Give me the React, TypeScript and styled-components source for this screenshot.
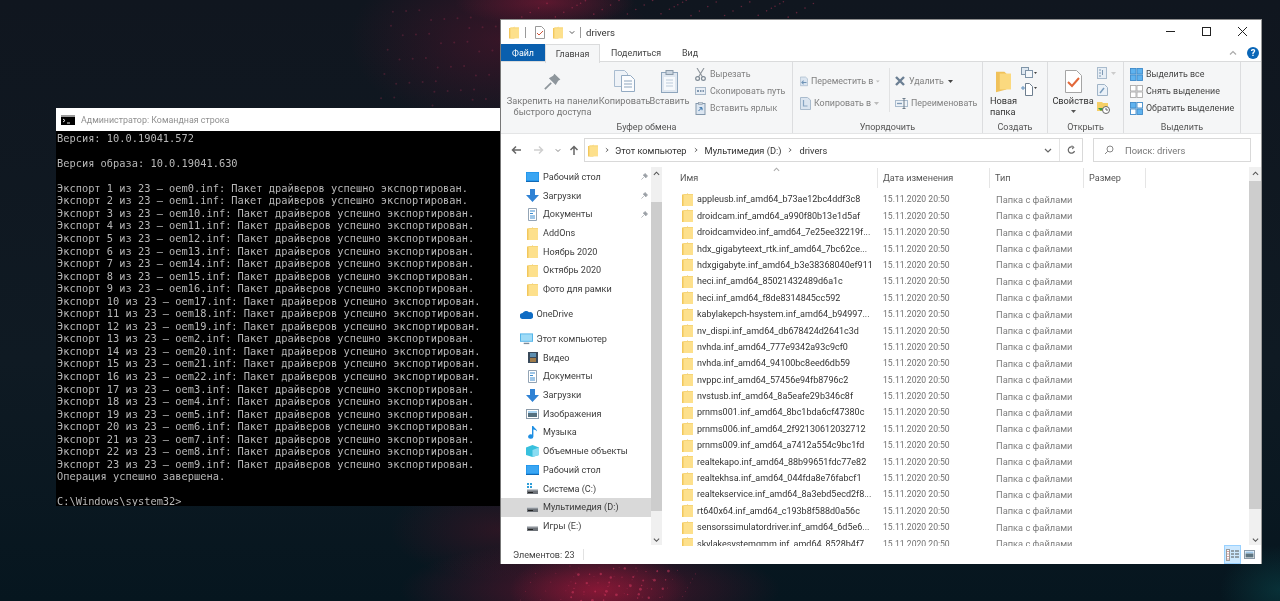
import React from "react";
import styled, { createGlobalStyle } from "styled-components";

const Global = createGlobalStyle`
  html, body { margin: 0; padding: 0; background: #0e1720; }
  #root { width: 1280px; height: 601px; overflow: hidden; }
  * { box-sizing: border-box; }
`;

const UI = `Roboto, "Noto Sans", sans-serif`;

const Desktop = styled.div`
  position: relative;
  width: 1280px;
  height: 601px;
  overflow: hidden;
  font-family: ${UI};
  background:
    radial-gradient(ellipse 90px 40px at 600px 590px, rgba(170, 25, 60, 0.6), transparent 100%),
    radial-gradient(ellipse 190px 50px at 590px 590px, rgba(120, 20, 50, 0.65), transparent 100%),
    radial-gradient(ellipse 90px 24px at 545px 2px, rgba(130, 25, 55, 0.6), transparent 100%),
    radial-gradient(ellipse 150px 90px at 500px 40px, rgba(85, 20, 45, 0.55), transparent 100%),
    radial-gradient(ellipse 110px 50px at 500px 530px, rgba(85, 20, 40, 0.45), transparent 100%),
    radial-gradient(ellipse 60px 45px at 1280px 590px, rgba(10, 70, 75, 0.55), transparent 100%),
    linear-gradient(180deg, #10161f 0%, #0f1a23 60%, #06161f 100%);
`;

const Speckles = styled.svg`
  position: absolute;
  inset: 0;
  filter: blur(0.5px);
`;

const CmdWindow = styled.div`
  position: absolute;
  left: 56px;
  top: 108px;
  width: 446px;
  height: 398px;
  display: flex;
  flex-direction: column;
  background: #000;
  filter: blur(0.3px);
`;

const CmdTitle = styled.div`
  height: 23px;
  flex: none;
  background: #fff;
  display: flex;
  align-items: center;
  gap: 6px;
  padding-left: 5px;
  font-size: 8.9px;
  color: #8f8f8f;
`;

const CmdBody = styled.pre`
  margin: 0;
  padding: 0.6px 0 0 1px;
  font-family: "DejaVu Sans Mono", "Liberation Mono", monospace;
  font-size: 10.35px;
  line-height: 12.55px;
  color: #b8b8b8;
  overflow: hidden;
`;

const Explorer = styled.div`
  position: absolute;
  left: 500px;
  top: 19px;
  width: 762px;
  height: 545px;
  display: flex;
  flex-direction: column;
  background: #fff;
  border-left: 1px solid #777;
  border-top: 1px solid #8e8e8e;
  border-right: 1px solid #9a9a9a;
  color: #333;
  font-size: 9px;
  filter: blur(0.3px);
`;

const TitleBar = styled.div`
  height: 24px;
  flex: none;
  display: flex;
  align-items: center;
  padding-left: 8px;
`;

const Gap = styled.span<{ $w: number }>`
  width: ${(p) => p.$w}px;
  flex: none;
`;

const TitleSep = styled.span<{ $m: number }>`
  width: 1px;
  height: 11px;
  background: #9a9a9a;
  margin: 0 ${(p) => p.$m}px;
`;

const TitleText = styled.span`
  font-size: 9.6px;
  color: #333;
`;

const WinControls = styled.div`
  margin-left: auto;
  display: flex;
  width: 107px;
  height: 100%;
  margin-right: 1px;
  padding-bottom: 2px;
`;

const WinButton = styled.div`
  flex: 1;
  display: flex;
  align-items: center;
  justify-content: center;
`;

const TabsRow = styled.div`
  height: 18px;
  flex: none;
  display: flex;
  align-items: stretch;
  font-size: 8.9px;
  border-bottom: 1px solid #dadbdc;
`;

const Tab = styled.div<{ $kind?: "file" | "active"; $w: number }>`
  width: ${(p) => p.$w}px;
  display: flex;
  align-items: center;
  justify-content: center;
  color: ${(p) => (p.$kind === "file" ? "#fff" : "#444")};
  background: ${(p) => (p.$kind === "file" ? "#0a5fae" : "#fff")};
  ${(p) =>
    p.$kind === "active" &&
    `border: 1px solid #dadbdc; border-bottom: none; height: 19px; z-index: 1; background:#f5f6f7;`}
`;

const RibbonRight = styled.div`
  margin-left: auto;
  margin-right: 2px;
  display: flex;
  align-items: center;
  gap: 10px;
`;

const HelpDot = styled.div`
  width: 12px;
  height: 12px;
  border-radius: 50%;
  background: #0a66b7;
  color: #fff;
  font-size: 9.5px;
  font-weight: 700;
  display: flex;
  align-items: center;
  justify-content: center;
`;

const Ribbon = styled.div`
  height: 72px;
  flex: none;
  background: #f5f6f7;
  border-bottom: 1px solid #e4e5e6;
  display: flex;
`;

const Group = styled.div<{ $w: number }>`
  width: ${(p) => p.$w}px;
  flex: none;
  border-right: 1px solid #dcdddf;
  display: flex;
  flex-direction: column;
`;

const GroupBody = styled.div<{ $pl: number }>`
  flex: 1;
  display: flex;
  align-items: flex-start;
  padding-left: ${(p) => p.$pl}px;
  min-height: 0;
`;

const GroupLabel = styled.div`
  height: 12px;
  flex: none;
  text-align: center;
  color: #555;
  font-size: 9px;
  line-height: 12px;
`;

const BigButton = styled.div<{ $w: number; $left?: boolean; $dim?: boolean }>`
  width: ${(p) => p.$w}px;
  flex: none;
  display: flex;
  flex-direction: column;
  align-items: ${(p) => (p.$left ? "flex-start" : "center")};
  padding-top: 7px;
  color: ${(p) => (p.$dim ? "#777" : "#333")};
  font-size: 9.2px;
  line-height: 11px;
  white-space: nowrap;
`;

const BigIconSlot = styled.div`
  height: 24px;
  margin-bottom: 1.5px;
  display: flex;
  align-items: center;
  justify-content: center;
  align-self: center;
`;

const CaretBelow = styled.span`
  margin-top: 4px;
  display: flex;
`;

const SmallStack = styled.div<{ $pt?: number; $gap?: number; $ml?: number; $w?: number }>`
  display: flex;
  flex-direction: column;
  padding-top: ${(p) => p.$pt ?? 6}px;
  gap: ${(p) => p.$gap ?? 4.5}px;
  margin-left: ${(p) => p.$ml ?? 0}px;
  ${(p) => p.$w && `width: ${p.$w}px;`}
  flex: none;
`;

const SmallRow = styled.div<{ $dim?: boolean; $tg?: number }>`
  height: 12.5px;
  display: flex;
  align-items: center;
  gap: ${(p) => p.$tg ?? 4}px;
  color: ${(p) => (p.$dim ? "#808080" : "#444")};
  font-size: 8.9px;
  white-space: nowrap;
`;

const VLine = styled.span`
  width: 1px;
  height: 44px;
  margin-top: 6px;
  background: #e1e2e3;
  flex: none;
`;

const NavBar = styled.div`
  height: 31px;
  flex: none;
  display: flex;
  align-items: center;
  padding-top: 1px;
`;

const NavIcons = styled.div`
  width: 83px;
  flex: none;
  display: flex;
  align-items: center;
  padding-left: 10px;
`;

const AddressBox = styled.div`
  width: 499px;
  height: 24px;
  flex: none;
  border: 1px solid #d9d9d9;
  display: flex;
  align-items: center;
  padding-left: 3px;
  color: #333;
  font-size: 9.25px;
`;

const CrumbSep = styled.span<{ $w?: number }>`
  display: inline-flex;
  width: ${(p) => p.$w ?? 18}px;
  justify-content: center;
`;

const AddressEnd = styled.div`
  margin-left: auto;
  height: 100%;
  display: flex;
  align-items: center;
`;

const AddressCell = styled.div<{ $sep?: boolean; $w: number }>`
  width: ${(p) => p.$w}px;
  height: 100%;
  display: flex;
  align-items: center;
  justify-content: center;
  ${(p) => p.$sep && `border-left: 1px solid #e4e4e4;`}
`;

const SearchBox = styled.div`
  width: 158px;
  height: 24px;
  margin-left: 10px;
  flex: none;
  border: 1px solid #d9d9d9;
  display: flex;
  align-items: center;
  padding-left: 10px;
  gap: 11px;
  color: #777;
  font-size: 9.4px;
`;

const Body = styled.div`
  flex: 1;
  min-height: 0;
  display: flex;
`;

const NavPane = styled.div`
  width: 150px;
  flex: none;
  padding-top: 2.6px;
  overflow: hidden;
`;

const NavRow = styled.div<{ $level: number; $sel?: boolean; $mt?: number }>`
  height: 18.7px;
  margin-top: ${(p) => p.$mt ?? 0}px;
  display: flex;
  align-items: center;
  padding-left: ${(p) => (p.$level === 0 ? 19 : 25)}px;
  gap: ${(p) => (p.$level === 0 ? 3.5 : 4)}px;
  color: #3c3c3c;
  font-size: 9.1px;
  background: ${(p) => (p.$sel ? "#d9d9d9" : "transparent")};
  white-space: nowrap;
`;

const NavIconSlot = styled.span`
  width: 13px;
  height: 13px;
  flex: none;
  display: flex;
  align-items: center;
  justify-content: center;
`;

const PinSlot = styled.span`
  margin-left: auto;
  margin-right: 3px;
  display: flex;
`;

const Scroll = styled.div<{ $thumbTop: number; $thumbH: number; $w: number }>`
  width: ${(p) => p.$w}px;
  flex: none;
  margin-top: 2px;
  background: #f0f0f0;
  position: relative;
  &::before {
    content: "";
    position: absolute;
    left: 0;
    right: 0;
    top: ${(p) => p.$thumbTop}px;
    height: ${(p) => p.$thumbH}px;
    background: #cdcdcd;
  }
`;

const ScrollArrow = styled.div<{ $end?: boolean }>`
  position: absolute;
  left: 0;
  right: 0;
  ${(p) => (p.$end ? "bottom: 2px;" : "top: 3px;")}
  display: flex;
  justify-content: center;
`;

const Content = styled.div`
  flex: 1;
  min-width: 0;
  display: flex;
  flex-direction: column;
  overflow: hidden;
  height: 381px;
`;

const HeaderRow = styled.div`
  height: 26.2px;
  flex: none;
  display: grid;
  grid-template-columns: 208px 112px 94px 62px;
  position: relative;
  color: #555;
  font-size: 9.1px;
`;

const HeaderCell = styled.div<{ $first?: boolean }>`
  display: flex;
  align-items: center;
  padding-left: ${(p) => (p.$first ? 10 : 5)}px;
  border-right: 1px solid #e5e5e5;
  margin: 3px 0 3px;
`;

const SortMark = styled.span`
  position: absolute;
  left: 103px;
  top: 0;
`;

const FileList = styled.div`
  flex: 1;
  min-height: 0;
  overflow: hidden;
`;

const FileRow = styled.div`
  height: 16.4px;
  display: grid;
  grid-template-columns: 208px 113px 93px;
  align-items: center;
  font-size: 9px;
  white-space: nowrap;
`;

const NameCell = styled.div`
  display: flex;
  align-items: center;
  gap: 4px;
  padding-left: 12px;
  color: #333;
  svg {
    flex: none;
  }
`;

const DateCell = styled.div`
  padding-left: 5px;
  color: #707070;
  font-size: 8.6px;
`;

const TypeCell = styled.div`
  padding-left: 5px;
  color: #7c7c7c;
  font-size: 9.3px;
`;

const StatusBar = styled.div`
  height: 19px;
  flex: none;
  display: flex;
  align-items: center;
  padding-left: 12px;
  color: #444;
  font-size: 9px;
`;

const StatusSep = styled.span`
  width: 1px;
  height: 11px;
  background: #e2e2e2;
  margin-left: 8px;
`;

const ViewButtons = styled.div`
  margin-left: auto;
  margin-right: 6px;
  display: flex;
  align-items: center;
  gap: 3px;
  height: 100%;
`;

const ViewActive = styled.div`
  width: 17px;
  height: 19px;
  background: #cce8ff;
  border: 1px solid #99d1ff;
  display: flex;
  align-items: center;
  justify-content: center;
`;

/* ---------- icons ---------- */

const Folder = ({ w = 11, h = 13 }: { w?: number; h?: number }) => (
  <svg width={w} height={h} viewBox="0 0 11 13">
    <path d="M0 1.5h4.5L6 0v13H0z" fill="#f2c75c" />
    <path d="M1.5 1h9.5v12H1.5z" fill="#fde08c" />
    <path d="M1.5 1h9.5v1H1.5z" fill="#f6d578" />
  </svg>
);

const Pin = ({ s = 7 }: { s?: number }) => (
  <svg width={s} height={s} viewBox="0 0 8 8">
    <path d="M4.6 0.5L7.5 3.4 6.6 3.9 5.6 5.6 2.5 2.4 4.1 1.4z M3.2 4.8L0.5 7.5" fill="#9a9fa5" stroke="#9a9fa5" strokeWidth="0.8" />
  </svg>
);

const BigPin = () => (
  <svg width="17" height="17" viewBox="0 0 8 8">
    <path d="M4.9 0.3L7.7 3.1 6.7 3.7 5.5 5.7 2.3 2.5 4.3 1.3z" fill="#8e969c" />
    <path d="M3.4 4.6L0.4 7.6" stroke="#8e969c" strokeWidth="0.8" />
  </svg>
);

const CopyIcon = () => (
  <svg width="21" height="22" viewBox="0 0 21 22">
    <path d="M.5.5h10l3 3v13H.5z" fill="#eef2f7" stroke="#a9bcd0" />
    <path d="M7.5 5.5h9l4 4v12h-13z" fill="#fbfcfe" stroke="#93aac2" />
    <path d="M10 11h8M10 14h8M10 17h8" stroke="#8da5bd" />
  </svg>
);

const PasteIcon = () => (
  <svg width="17" height="23" viewBox="0 0 17 23">
    <rect x=".5" y="2.5" width="16" height="20" fill="#dfe7f0" stroke="#8ea5bc" />
    <rect x="5" y=".5" width="7" height="4" fill="#c9d4df" stroke="#8a9aa9" />
    <path d="M3 7h11v13H3z" fill="#f6f9fc" />
    <path d="M5 10h7M5 13h7M5 16h7" stroke="#bccbda" />
  </svg>
);

const Scissors = () => (
  <svg width="11" height="13" viewBox="0 0 11 13">
    <path d="M2 0l5.5 9M9 0L3.5 9" stroke="#8d949b" strokeWidth="1.1" fill="none" />
    <circle cx="2.6" cy="10.5" r="1.9" fill="none" stroke="#7e8a95" strokeWidth="1.2" />
    <circle cx="8.4" cy="10.5" r="1.9" fill="none" stroke="#7e8a95" strokeWidth="1.2" />
  </svg>
);

const PathIcon = () => (
  <svg width="11" height="8" viewBox="0 0 11 8">
    <rect x=".5" y=".5" width="10" height="7" fill="#e8eef5" stroke="#a7b7c7" />
    <path d="M2 4h2M5 4h1.5M7.5 4H9" stroke="#5f7c99" strokeWidth="1.4" />
  </svg>
);

const ShortcutIcon = () => (
  <svg width="11" height="13" viewBox="0 0 10 13">
    <rect x=".5" y="1.5" width="9" height="11" fill="#dce6f1" stroke="#8397ab" />
    <rect x="3" y=".5" width="4" height="2" fill="#c7d0da" stroke="#8a9aa9" strokeWidth=".6" />
    <path d="M3 9l3-3M4 5.7h2.5v2.5" stroke="#2f6ca5" fill="none" />
  </svg>
);

const MoveIcon = ({ arrow }: { arrow: boolean }) => (
  <svg width="11" height="14" viewBox="0 0 11 14">
    <path d="M.5 1.5h7l3 2.5v9.5H.5z" fill="#dbe5f0" stroke="#a9bbcd" />
    {arrow ? (
      <path d="M9 9H3M5 6.5L2.5 9 5 11.5" stroke="#6f93b6" fill="none" strokeWidth="1.4" />
    ) : (
      <path d="M3.5 4v6h4" stroke="#87a5c2" fill="none" strokeWidth="1.2" />
    )}
  </svg>
);

const DeleteX = () => (
  <svg width="10" height="10" viewBox="0 0 10 10">
    <path d="M1 1l8 8M9 1L1 9" stroke="#6b7f93" strokeWidth="2.4" />
  </svg>
);

const RenameIcon = () => (
  <svg width="13" height="11" viewBox="0 0 13 11">
    <rect x=".5" y="2.5" width="12" height="6" fill="#eef3f8" stroke="#a9bbcd" />
    <path d="M2 5.5h5" stroke="#7f9ab5" strokeWidth="1.4" />
    <path d="M9 .5v10M7.5.5h3M7.5 10.5h3" stroke="#6d7c8a" fill="none" />
  </svg>
);

const Caret = ({ c = "#777" }: { c?: string }) => (
  <svg width="5" height="3" viewBox="0 0 5 3">
    <path d="M0 0h5L2.5 3z" fill={c} />
  </svg>
);

const Chevron = ({ dir = "right", c = "#666", s = 7 }: { dir?: "right" | "down" | "up"; c?: string; s?: number }) => {
  const d = dir === "right" ? "M2.5 1l3 2.5-3 2.5" : dir === "down" ? "M1 2.5l3 3 3-3" : "M1 5l3-3 3 3";
  return (
    <svg width={s} height={s} viewBox="0 0 8 7">
      <path d={d} fill="none" stroke={c} strokeWidth="1.2" />
    </svg>
  );
};

const NewFolderBig = () => (
  <svg width="15" height="23" viewBox="0 0 16 23">
    <path d="M0 1h9l2 2v17l-11 3z" fill="#f0c15a" />
    <path d="M4 3h12v17H4z" fill="#fbd97f" />
  </svg>
);

const NewItem = () => (
  <svg width="16" height="13" viewBox="0 0 16 13">
    <rect x=".5" y=".5" width="7" height="7" fill="#dfe8f1" stroke="#7f94a8" />
    <rect x="4.5" y="3.5" width="7" height="7" fill="#f5f8fb" stroke="#7f94a8" />
    <path d="M13 5h3l-1.5 2z" fill="#444" />
  </svg>
);

const QuickItem = () => (
  <svg width="16" height="13" viewBox="0 0 16 13">
    <path d="M4.5.5h4l3 3v9h-7z" fill="#fff" stroke="#6d7e8f" />
    <path d="M0 5h4M2 3v4" stroke="#5f90be" />
    <path d="M13 4h3l-1.5 2z" fill="#444" />
  </svg>
);

const PropsIcon = () => (
  <svg width="17" height="23" viewBox="0 0 17 23">
    <path d="M.5.5h11l5 5v17H.5z" fill="#fff" stroke="#a5a5a5" />
    <path d="M3 12l4 4 7-8" fill="none" stroke="#e2683a" strokeWidth="2" />
  </svg>
);

const OpenSmall = () => (
  <svg width="10" height="12" viewBox="0 0 10 12">
    <rect x=".5" y=".5" width="9" height="11" fill="#e7eef5" stroke="#a9bbcd" />
    <path d="M2 3h2M2 6h2M2 9h2M5.5 8V3" stroke="#7f9ab5" />
  </svg>
);

const EditSmall = () => (
  <svg width="11" height="12" viewBox="0 0 11 12">
    <path d="M.5.5h7l3 3v8H.5z" fill="#eaf1f8" stroke="#9fb3c6" />
    <path d="M3 9l4-5" stroke="#7a9cbc" strokeWidth="1.5" />
  </svg>
);

const HistorySmall = () => (
  <svg width="13" height="13" viewBox="0 0 13 13">
    <path d="M0 1h5l1 1h5v8H0z" fill="#f5cf66" />
    <path d="M1 7l3 3 3-3" fill="#3d9b3d" />
    <circle cx="9" cy="9" r="3.5" fill="#fff" stroke="#666" />
    <path d="M9 7v2h2" stroke="#666" fill="none" />
  </svg>
);

const SelectIcon = ({ mode }: { mode: "all" | "none" | "invert" }) => {
  const cells: [number, number][] = [
    [0.5, 0.5],
    [7, 0.5],
    [0.5, 7],
    [7, 7],
  ];
  return (
    <svg width="13" height="13" viewBox="0 0 13 13">
      {cells.map(([x, y], i) => {
        const on = mode === "all" || (mode === "invert" && (i === 0 || i === 3));
        return (
          <rect
            key={i}
            x={x}
            y={y}
            width="5.5"
            height="5.5"
            fill={on ? "#5fb2ee" : "#fff"}
            stroke={mode === "none" ? "#aaa" : "#3f8bc9"}
            strokeWidth=".9"
          />
        );
      })}
    </svg>
  );
};

const QuickCheck = () => (
  <svg width="10" height="13" viewBox="0 0 10 13">
    <path d="M.5.5h6l3 3v9H.5z" fill="#fff" stroke="#999" />
    <path d="M2 7l2 2 4-4" fill="none" stroke="#d0553a" />
  </svg>
);

const Arrow = ({ dir, c }: { dir: "left" | "right" | "up"; c: string }) => {
  const d =
    dir === "left"
      ? "M10 5H1.5M5 1.5L1.5 5 5 8.5"
      : dir === "right"
        ? "M0 5h8.5M5 1.5L8.5 5 5 8.5"
        : "M5 10V1.5M1.5 5L5 1.5 8.5 5";
  return (
    <svg width="10" height="10" viewBox="0 0 10 10">
      <path d={d} fill="none" stroke={c} strokeWidth="1.5" />
    </svg>
  );
};

const Refresh = () => (
  <svg width="9" height="10" viewBox="0 0 9 10">
    <path d="M7.5 6a3.2 3.2 0 1 1-1-3.5" fill="none" stroke="#666" strokeWidth="1.2" />
    <path d="M5 .5l2 2-2 1.5" fill="none" stroke="#666" />
  </svg>
);

const SearchIcon = () => (
  <svg width="10" height="10" viewBox="0 0 10 10">
    <circle cx="6" cy="4" r="3" fill="none" stroke="#888" />
    <path d="M3.8 6.2L1 9" stroke="#888" />
  </svg>
);

const CmdIcon = () => (
  <svg width="14" height="10" viewBox="0 0 14 10">
    <rect width="14" height="10" fill="#000" />
    <rect width="14" height="2" fill="#9a9a9a" />
    <path d="M2 4l2 1.5L2 7M6 8h3" stroke="#ddd" fill="none" />
  </svg>
);

const Desk = () => (
  <svg width="13" height="10" viewBox="0 0 13 10">
    <rect width="13" height="10" fill="#1a8fe8" />
    <rect x=".6" y=".6" width="11.8" height="7.8" fill="#3aa6f3" />
    <rect y="9" width="13" height="1" fill="#1369b4" />
  </svg>
);

const Down = () => (
  <svg width="13" height="13" viewBox="0 0 13 13">
    <path d="M4 0h5v6h4l-6.5 7L0 6h4z" fill="#2f82d4" />
  </svg>
);

const Docs = () => (
  <svg width="9" height="13" viewBox="0 0 9 13">
    <path d="M.5.5h8v12h-8z" fill="#fff" stroke="#93a4b5" />
    <path d="M2 3h5M2 5.5h3M2 8h5M2 10h5" stroke="#3e8ed0" />
  </svg>
);

const Cloud = () => (
  <svg width="13" height="9" viewBox="0 0 13 9">
    <path d="M3 9a3 3 0 0 1-.4-6A4 4 0 0 1 9 2.2 3.4 3.4 0 0 1 10.6 9z" fill="#0f6cc4" />
  </svg>
);

const Monitor = () => (
  <svg width="14" height="12" viewBox="0 0 14 12">
    <rect width="14" height="9" fill="#4fb2e8" />
    <rect x="1" y="1" width="12" height="7" fill="#9edbf7" />
    <rect x="4" y="10" width="6" height="1.5" fill="#7a8a99" />
  </svg>
);

const Video = () => (
  <svg width="10" height="11" viewBox="0 0 10 11">
    <rect width="10" height="11" fill="#39495a" />
    <rect x="2" y="1" width="6" height="4" fill="#5d8fb0" />
    <rect x="2" y="6" width="6" height="4" fill="#a07c4a" />
  </svg>
);

const Pics = () => (
  <svg width="13" height="10" viewBox="0 0 13 10">
    <rect x=".5" y=".5" width="12" height="9" fill="#fff" stroke="#8b9aa8" />
    <path d="M2 2h9v2H2z" fill="#a8d2ef" />
    <path d="M2 4h9v4H2z" fill="#55707f" />
  </svg>
);

const Music = () => (
  <svg width="10" height="13" viewBox="0 0 10 13">
    <path d="M4 0h1.4c.3 2 3.6 2.6 3.6 5.6-1-1.4-2-1.8-3.6-2v7a2.6 2.2 0 1 1-1.4-2z" fill="#1f8fe3" />
  </svg>
);

const Cube = () => (
  <svg width="13" height="12" viewBox="0 0 13 12">
    <path d="M6.5 0L13 2.5V10l-6.5 2L0 10V2.5z" fill="#38c0dd" />
    <path d="M6.5 5L13 2.5V10l-6.5 2z" fill="#8adcf2" />
  </svg>
);

const Drive = ({ win }: { win?: boolean }) => (
  <svg width="13" height="12" viewBox="0 0 13 12">
    {win && <path d="M1 0h2v2H1zM4 0h2v2H4zM1 3h2v2H1zM4 3h2v2H4z" fill="#2f9ed8" />}
    <rect x="1" y="7" width="11" height="4" fill="#6d7278" />
    <rect x="1" y="6" width="11" height="1.4" fill="#c4c8cc" />
    <rect x="2" y="9" width="5" height="1" fill="#222" />
  </svg>
);

const DetailsView = () => (
  <svg width="13" height="12" viewBox="0 0 13 12">
    <rect x=".5" y=".5" width="3" height="11" fill="#fff" stroke="#9a9a9a" />
    <path d="M1 2.5h2M1 5h2M1 7.5h2M1 10h2" stroke="#c77" strokeWidth=".7" />
    <path d="M5 2h3M9 2h4M5 5h3M9 5h4M5 8h3M9 8h4" stroke="#555" />
  </svg>
);

const ThumbView = () => (
  <svg width="11" height="9" viewBox="0 0 11 9">
    <rect x=".5" y=".5" width="10" height="8" fill="#fff" stroke="#8b9aa8" />
    <path d="M1.5 1.5h8v2h-8z" fill="#9fc9ea" />
    <path d="M1.5 3.5h8v4h-8z" fill="#5d7480" />
  </svg>
);

/* ---------- data ---------- */

const oems = [0, 1, 10, 11, 12, 13, 14, 15, 16, 17, 18, 19, 2, 20, 21, 22, 3, 4, 5, 6, 7, 8, 9];
const cmdText = [
  "Версия: 10.0.19041.572",
  "",
  "Версия образа: 10.0.19041.630",
  "",
  ...oems.map((o, i) => `Экспорт ${i + 1} из 23 — oem${o}.inf: Пакет драйверов успешно экспортирован.`),
  "Операция успешно завершена.",
  "",
  "C:\\Windows\\system32>",
].join("\n");

const files = [
  "appleusb.inf_amd64_b73ae12bc4ddf3c8",
  "droidcam.inf_amd64_a990f80b13e1d5af",
  "droidcamvideo.inf_amd64_7e25ee32219f...",
  "hdx_gigabyteext_rtk.inf_amd64_7bc62ce...",
  "hdxgigabyte.inf_amd64_b3e38368040ef911",
  "heci.inf_amd64_85021432489d6a1c",
  "heci.inf_amd64_f8de8314845cc592",
  "kabylakepch-hsystem.inf_amd64_b94997...",
  "nv_dispi.inf_amd64_db678424d2641c3d",
  "nvhda.inf_amd64_777e9342a93c9cf0",
  "nvhda.inf_amd64_94100bc8eed6db59",
  "nvppc.inf_amd64_57456e94fb8796c2",
  "nvstusb.inf_amd64_8a5eafe29b346c8f",
  "prnms001.inf_amd64_8bc1bda6cf47380c",
  "prnms006.inf_amd64_2f92130612032712",
  "prnms009.inf_amd64_a7412a554c9bc1fd",
  "realtekapo.inf_amd64_88b99651fdc77e82",
  "realtekhsa.inf_amd64_044fda8e76fabcf1",
  "realtekservice.inf_amd64_8a3ebd5ecd2f8...",
  "rt640x64.inf_amd64_c193b8f588d0a56c",
  "sensorssimulatordriver.inf_amd64_6d5e6...",
  "skylakesystemgmm.inf_amd64_8528b4f7...",
];

type NavItem = { t: string; icon: React.ReactNode; level: number; pin?: boolean; sel?: boolean; mt?: number };

const navItems: NavItem[] = [
  { t: "Рабочий стол", icon: <Desk />, level: 1, pin: true },
  { t: "Загрузки", icon: <Down />, level: 1, pin: true },
  { t: "Документы", icon: <Docs />, level: 1, pin: true },
  { t: "AddOns", icon: <Folder />, level: 1 },
  { t: "Ноябрь 2020", icon: <Folder />, level: 1 },
  { t: "Октябрь 2020", icon: <Folder />, level: 1 },
  { t: "Фото для рамки", icon: <Folder />, level: 1 },
  { t: "OneDrive", icon: <Cloud />, level: 0, mt: 6.3 },
  { t: "Этот компьютер", icon: <Monitor />, level: 0, mt: 6.3 },
  { t: "Видео", icon: <Video />, level: 1 },
  { t: "Документы", icon: <Docs />, level: 1 },
  { t: "Загрузки", icon: <Down />, level: 1 },
  { t: "Изображения", icon: <Pics />, level: 1 },
  { t: "Музыка", icon: <Music />, level: 1 },
  { t: "Объемные объекты", icon: <Cube />, level: 1 },
  { t: "Рабочий стол", icon: <Desk />, level: 1 },
  { t: "Система (C:)", icon: <Drive win />, level: 1 },
  { t: "Мультимедия (D:)", icon: <Drive />, level: 1, sel: true },
  { t: "Игры (E:)", icon: <Drive />, level: 1 },
];

/* deterministic speckles for the wallpaper */
const dots = Array.from({ length: 170 }, (_, i) => {
  const a = (i * 7919) % 1000;
  const b = (i * 104729) % 1000;
  const zone = i % 4;
  if (zone === 0) return { x: 570 + (a / 1000) * 100, y: 566 + (b / 1000) * 35, r: 0.6 + (a % 5) * 0.2, o: 0.5 };
  if (zone === 1) return { x: 520 + (a / 1000) * 180, y: 566 + (b / 1000) * 35, r: 0.4 + (b % 4) * 0.15, o: 0.3 };
  if (zone === 2) return { x: 520 + (a / 1000) * 300, y: (b / 1000) * 18, r: 0.4 + (a % 4) * 0.2, o: 0.4 };
  return { x: 380 + (a / 1000) * 118, y: 10 + (b / 1000) * 96, r: 0.4 + (b % 4) * 0.2, o: 0.22 };
});

export default function App() {
  return (
    <Desktop>
      <Global />
      <Speckles width="1280" height="601" viewBox="0 0 1280 601">
        {dots.map((d, i) => (
          <circle key={i} cx={d.x} cy={d.y} r={d.r} fill="#d83a62" opacity={d.o} />
        ))}
      </Speckles>

      <CmdWindow>
        <CmdTitle>
          <CmdIcon />
          Администратор: Командная строка
        </CmdTitle>
        <CmdBody>{cmdText}</CmdBody>
      </CmdWindow>

      <Explorer>
        <TitleBar>
          <Folder w={10} h={13} />
          <TitleSep $m={6} />
          <Gap $w={3} />
          <QuickCheck />
          <Gap $w={8} />
          <Folder w={10} h={13} />
          <Gap $w={6} />
          <Chevron dir="down" c="#444" s={6} />
          <TitleSep $m={5} />
          <TitleText>drivers</TitleText>
          <WinControls>
            <WinButton>
              <svg width="9" height="9" viewBox="0 0 9 9">
                <path d="M0 4.5h9" stroke="#222" />
              </svg>
            </WinButton>
            <WinButton>
              <svg width="9" height="9" viewBox="0 0 9 9">
                <rect x=".5" y=".5" width="8" height="8" fill="none" stroke="#222" />
              </svg>
            </WinButton>
            <WinButton>
              <svg width="9" height="9" viewBox="0 0 9 9">
                <path d="M0 0l9 9M9 0L0 9" stroke="#222" />
              </svg>
            </WinButton>
          </WinControls>
        </TitleBar>

        <TabsRow>
          <Tab $kind="file" $w={44}>Файл</Tab>
          <Tab $kind="active" $w={55}>Главная</Tab>
          <Tab $w={72}>Поделиться</Tab>
          <Tab $w={36}>Вид</Tab>
          <RibbonRight>
            <Chevron dir="up" c="#aaa" s={8} />
            <HelpDot>?</HelpDot>
          </RibbonRight>
        </TabsRow>

        <Ribbon>
          <Group $w={292}>
            <GroupBody $pl={6}>
              <BigButton $w={91} $dim>
                <BigIconSlot><BigPin /></BigIconSlot>
                <span>Закрепить на панели</span>
                <span>быстрого доступа</span>
              </BigButton>
              <BigButton $w={53} $dim>
                <BigIconSlot><CopyIcon /></BigIconSlot>
                Копировать
              </BigButton>
              <BigButton $w={37} $dim>
                <BigIconSlot><PasteIcon /></BigIconSlot>
                Вставить
              </BigButton>
              <SmallStack $ml={7}>
                <SmallRow $dim><Scissors />Вырезать</SmallRow>
                <SmallRow $dim><PathIcon />Скопировать путь</SmallRow>
                <SmallRow $dim><ShortcutIcon />Вставить ярлык</SmallRow>
              </SmallStack>
            </GroupBody>
            <GroupLabel>Буфер обмена</GroupLabel>
          </Group>

          <Group $w={190}>
            <GroupBody $pl={7}>
              <SmallStack $pt={13} $gap={9.5} $w={80}>
                <SmallRow $dim $tg={3}>
                  <MoveIcon arrow />Переместить в <Caret c="#bbb" />
                </SmallRow>
                <SmallRow $dim $tg={3}>
                  <MoveIcon arrow={false} />Копировать в <Caret c="#bbb" />
                </SmallRow>
              </SmallStack>
              <Gap $w={9} />
              <VLine />
              <SmallStack $pt={13} $gap={9.5} $ml={5}>
                <SmallRow $dim $tg={4}>
                  <DeleteX />Удалить <Caret c="#444" />
                </SmallRow>
                <SmallRow $dim $tg={3}>
                  <RenameIcon />Переименовать
                </SmallRow>
              </SmallStack>
            </GroupBody>
            <GroupLabel>Упорядочить</GroupLabel>
          </Group>

          <Group $w={65}>
            <GroupBody $pl={7}>
              <BigButton $w={26} $left>
                <BigIconSlot><NewFolderBig /></BigIconSlot>
                <span>Новая</span>
                <span>папка</span>
              </BigButton>
              <SmallStack $ml={5} $pt={5} $gap={4}>
                <SmallRow><NewItem /></SmallRow>
                <SmallRow><QuickItem /></SmallRow>
              </SmallStack>
            </GroupBody>
            <GroupLabel>Создать</GroupLabel>
          </Group>

          <Group $w={76}>
            <GroupBody $pl={5}>
              <BigButton $w={40}>
                <BigIconSlot><PropsIcon /></BigIconSlot>
                Свойства
                <CaretBelow><Caret c="#555" /></CaretBelow>
              </BigButton>
              <SmallStack $ml={4} $pt={5} $gap={4.5}>
                <SmallRow><OpenSmall /><Caret c="#ccc" /></SmallRow>
                <SmallRow><EditSmall /></SmallRow>
                <SmallRow><HistorySmall /></SmallRow>
              </SmallStack>
            </GroupBody>
            <GroupLabel>Открыть</GroupLabel>
          </Group>

          <Group $w={117}>
            <GroupBody $pl={6}>
              <SmallStack>
                <SmallRow $tg={3}><SelectIcon mode="all" />Выделить все</SmallRow>
                <SmallRow $tg={3}><SelectIcon mode="none" />Снять выделение</SmallRow>
                <SmallRow $tg={3}><SelectIcon mode="invert" />Обратить выделение</SmallRow>
              </SmallStack>
            </GroupBody>
            <GroupLabel>Выделить</GroupLabel>
          </Group>
        </Ribbon>

        <NavBar>
          <NavIcons>
            <Arrow dir="left" c="#666" />
            <Gap $w={13} />
            <Arrow dir="right" c="#cfcfcf" />
            <Gap $w={11} />
            <Chevron dir="down" c="#777" s={6} />
            <Gap $w={8} />
            <Arrow dir="up" c="#666" />
          </NavIcons>
          <AddressBox>
            <Folder w={10} h={13} />
            <CrumbSep $w={17}><Chevron c="#666" s={6} /></CrumbSep>
            <span>Этот компьютер</span>
            <CrumbSep><Chevron c="#666" s={6} /></CrumbSep>
            <span>Мультимедия (D:)</span>
            <CrumbSep><Chevron c="#666" s={6} /></CrumbSep>
            <span>drivers</span>
            <AddressEnd>
              <AddressCell $w={22}><Chevron dir="down" c="#666" s={8} /></AddressCell>
              <AddressCell $w={23} $sep><Refresh /></AddressCell>
            </AddressEnd>
          </AddressBox>
          <SearchBox>
            <SearchIcon />
            Поиск: drivers
          </SearchBox>
        </NavBar>

        <Body>
          <NavPane>
            {navItems.map((n, i) => (
              <NavRow key={i} $level={n.level} $sel={n.sel} $mt={n.mt}>
                <NavIconSlot>{n.icon}</NavIconSlot>
                {n.t}
                {n.pin && (
                  <PinSlot>
                    <Pin s={7} />
                  </PinSlot>
                )}
              </NavRow>
            ))}
          </NavPane>
          <Scroll $w={11} $thumbTop={35} $thumbH={309}>
            <ScrollArrow><Chevron dir="up" c="#555" s={7} /></ScrollArrow>
            <ScrollArrow $end><Chevron dir="down" c="#555" s={7} /></ScrollArrow>
          </Scroll>
          <Gap $w={8} />
          <Content>
            <HeaderRow>
              <SortMark><Chevron dir="up" c="#aaa" s={7} /></SortMark>
              <HeaderCell $first>Имя</HeaderCell>
              <HeaderCell>Дата изменения</HeaderCell>
              <HeaderCell>Тип</HeaderCell>
              <HeaderCell>Размер</HeaderCell>
            </HeaderRow>
            <FileList>
              {files.map((f) => (
                <FileRow key={f}>
                  <NameCell>
                    <Folder />
                    {f}
                  </NameCell>
                  <DateCell>15.11.2020 20:50</DateCell>
                  <TypeCell>Папка с файлами</TypeCell>
                </FileRow>
              ))}
            </FileList>
          </Content>
          <Scroll $w={12} $thumbTop={14} $thumbH={328}>
            <ScrollArrow><Chevron dir="up" c="#555" s={7} /></ScrollArrow>
            <ScrollArrow $end><Chevron dir="down" c="#555" s={7} /></ScrollArrow>
          </Scroll>
        </Body>

        <StatusBar>
          Элементов: 23
          <StatusSep />
          <ViewButtons>
            <ViewActive><DetailsView /></ViewActive>
            <ThumbView />
          </ViewButtons>
        </StatusBar>
      </Explorer>
    </Desktop>
  );
}
